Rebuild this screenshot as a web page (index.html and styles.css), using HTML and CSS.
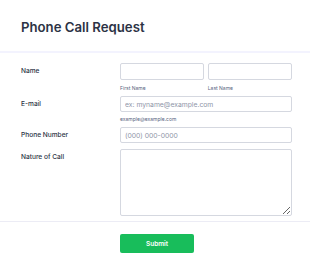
FILE: index.html
```html
<!DOCTYPE html>
<html lang="en">
<head>
    <meta charset="UTF-8">
    <title>Phone Call Request</title>
    <link rel="stylesheet" href="styles.css">
</head>
<body>
    <header class="form-header">
        <h1>Phone Call Request</h1>
    </header>
    <form class="form-all">
        <ul class="form-list">
            <li class="form-line line-name">
                <label class="form-label">Name</label>
                <div class="form-input">
                    <div class="name-fields">
                        <span class="sub-field">
                            <input type="text" class="form-textbox">
                            <label class="sublabel">First Name</label>
                        </span>
                        <span class="sub-field">
                            <input type="text" class="form-textbox">
                            <label class="sublabel">Last Name</label>
                        </span>
                    </div>
                </div>
            </li>
            <li class="form-line line-email">
                <label class="form-label">E-mail</label>
                <div class="form-input">
                    <input type="email" class="form-textbox" placeholder="ex: myname@example.com">
                    <label class="sublabel">example@example.com</label>
                </div>
            </li>
            <li class="form-line line-phone">
                <label class="form-label">Phone Number</label>
                <div class="form-input">
                    <input type="tel" class="form-textbox" placeholder="(000) 000-0000">
                </div>
            </li>
            <li class="form-line line-textarea">
                <label class="form-label">Nature of Call</label>
                <div class="form-input">
                    <textarea class="form-textarea"></textarea>
                </div>
            </li>
            <li class="form-line line-submit">
                <div class="form-buttons">
                    <button type="button" class="form-submit">Submit</button>
                </div>
            </li>
        </ul>
    </form>
</body>
</html>
```

FILE: styles.css
```css
body {
    margin: 0;
    background: #fff;
    color: #2c3345;
    font-family: Inter, "Noto Sans", sans-serif;
}
.form-header {
    height: 53px;
    border-bottom: 2px solid #f3f3fe;
    box-sizing: border-box;
    padding: 18px 0 0 21px;
}
.form-header h1 {
    margin: 0;
    font-size: 13.2px;
    line-height: 18px;
    font-weight: 600;
    color: #2c3345;
}
.form-list {
    list-style: none;
    margin: 0;
    padding: 10px 0 0 0;
}
.form-line {
    display: flex;
    padding: 0 18px 0 21px;
}
.form-label {
    width: 99px;
    flex-shrink: 0;
    font-size: 6.6px;
    font-weight: 500;
    line-height: 16px;
    color: #2c3345;
}
.form-input {
    flex: 1;
    display: flex;
    flex-direction: column;
}
.name-fields {
    display: flex;
    gap: 3.5px;
}
.sub-field {
    flex: 1;
    display: flex;
    flex-direction: column;
}
.form-textbox, .form-textarea {
    box-sizing: border-box;
    width: 100%;
    height: 16px;
    margin: 0;
    border: 1px solid #d5d8e0;
    border-radius: 2px;
    padding: 0 4px;
    background: #fff;
    font-family: Inter, "Noto Sans", sans-serif;
    font-size: 6.8px;
    color: #2c3345;
    outline: none;
}
.form-textbox::placeholder {
    color: #8f96a8;
}
.line-name .form-textbox {
    height: 17px;
}
.line-name .form-label {
    line-height: 17px;
}
.sublabel {
    margin-top: 4px;
    font-size: 5px;
    line-height: 8px;
    color: #57647e;
}
.line-name {
    margin-bottom: 4px;
}
.line-email {
    margin-bottom: 4px;
}
.line-email .sublabel {
    margin-top: 3px;
}
.line-phone {
    margin-bottom: 6px;
}
.form-textarea {
    height: 67px;
    padding: 4px;
    resize: vertical;
    display: block;
}
.line-textarea {
    padding-bottom: 5px;
    border-bottom: 1px solid #ececf5;
}
.line-submit {
    padding-top: 12px;
    padding-left: 120px;
}
.form-buttons {
    display: flex;
}
.form-submit {
    width: 74px;
    height: 19px;
    border: none;
    border-radius: 2px;
    background: #18bd5b;
    color: #fff;
    font-family: Inter, "Noto Sans", sans-serif;
    font-size: 6.5px;
    font-weight: 600;
    cursor: pointer;
}
```
